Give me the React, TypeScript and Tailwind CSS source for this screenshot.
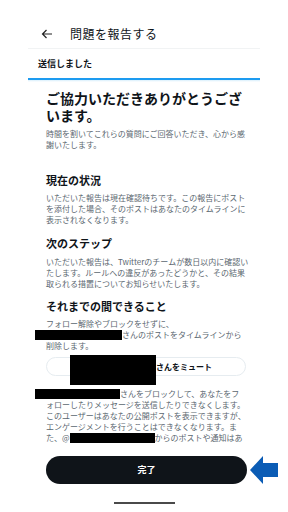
import React from "react";

const Redact = ({ w, h = 10, ml = 0 }: { w: number; h?: number; ml?: number }) => (
  <span
    className="inline-block bg-black align-middle"
    style={{ width: w, height: h, marginLeft: ml }}
  />
);

export default function App() {
  return (
    <div className="relative w-[288px] h-[512px] bg-white overflow-hidden font-['Noto_Sans_CJK_JP',sans-serif] text-[#0f1419]">
      {/* header */}
      <div className="mt-[20px] h-[28px] flex items-center">
        <svg className="ml-[41px]" width="12" height="10" viewBox="0 0 12 10">
          <path d="M11 5H1.5M5.5 1L1.5 5l4 4" fill="none" stroke="#222" strokeWidth="1.2" />
        </svg>
        <span className="ml-[17px] text-[12px] leading-[14px] tracking-[0.5px]">問題を報告する</span>
      </div>
      <div className="mx-[28px] h-px bg-[#f1f3f4]" />
      <div className="mx-[28px] h-[29px] flex items-center pl-[10px]">
        <span className="text-[9px] leading-[12px] font-bold">送信しました</span>
      </div>
      <div className="mx-[28px] h-[2px] bg-[#1d9bf0]" />
      <div className="mx-[28px] h-[2px] bg-gradient-to-b from-[#d9effc] to-white" />

      {/* content */}
      <div className="h-[364px] overflow-hidden pl-[46px] pr-[42px]">
        <h1 className="mt-[8px] text-[14px] leading-[17px] font-bold">
          <div className="whitespace-nowrap">ご協力いただきありがとうござ</div>
          <div className="whitespace-nowrap">います。</div>
        </h1>
        <div className="mt-[4px] text-[8px] leading-[11px] text-[#5b6770] whitespace-nowrap">
          <div>時間を割いてこれらの質問にご回答いただき、心から感</div>
          <div>謝いたします。</div>
        </div>

        <h2 className="mt-[23px] text-[11px] leading-[14px] font-bold whitespace-nowrap">現在の状況</h2>
        <div className="mt-[5px] text-[8px] leading-[11px] text-[#5b6770] whitespace-nowrap">
          <div>いただいた報告は現在確認待ちです。この報告にポスト</div>
          <div>を添付した場合、そのポストはあなたのタイムラインに</div>
          <div>表示されなくなります。</div>
        </div>

        <h2 className="mt-[11px] text-[11px] leading-[14px] font-bold whitespace-nowrap">次のステップ</h2>
        <div className="mt-[6px] text-[8px] leading-[11px] text-[#5b6770] whitespace-nowrap">
          <div>いただいた報告は、Twitterのチームが数日以内に確認い</div>
          <div>たします。ルールへの違反があったどうかと、その結果</div>
          <div>取られる措置についてお知らせいたします。</div>
        </div>

        <h2 className="mt-[10px] text-[11px] leading-[14px] font-bold whitespace-nowrap">それまでの間できること</h2>
        <div className="mt-[5px] text-[8px] leading-[11px] text-[#5b6770] whitespace-nowrap">
          <div>フォロー解除やブロックをせずに、</div>
          <div className="flex items-center">
            <Redact w={87} ml={-11} />
            <span>さんのポストをタイムラインから</span>
          </div>
          <div>削除します。</div>
        </div>

        <div className="relative mt-[6px] h-[19px] rounded-full border border-[#e6ecf0] flex items-center">
          <span className="absolute left-[23px] top-[-3px] w-[86px] h-[30px] bg-black" />
          <span className="ml-[109px] text-[8px] leading-[11px] font-bold whitespace-nowrap">さんをミュート</span>
        </div>

        <div className="mt-[12px] text-[8px] leading-[11px] text-[#5b6770] whitespace-nowrap">
          <div className="flex items-center">
            <Redact w={85} ml={-11} />
            <span>さんをブロックして、あなたをフ</span>
          </div>
          <div>ォローしたりメッセージを送信したりできなくします。</div>
          <div>このユーザーはあなたの公開ポストを表示できますが、</div>
          <div>エンゲージメントを行うことはできなくなります。ま</div>
          <div className="flex items-center">
            <span>た、@</span>
            <Redact w={85} ml={0} />
            <span>からのポストや通知はあ</span>
          </div>
        </div>
      </div>

      {/* footer */}
      <div className="pt-[10px] pl-[46px]">
        <button className="w-[201px] h-[28px] rounded-full bg-[#0f1419] text-white text-[9px] font-bold flex items-center justify-center">
          完了
        </button>
      </div>
      <div className="mt-[18px] mx-auto w-[61px] h-[2px] bg-[#4a4a4a]" />

      <svg className="absolute left-[250px] top-[456px]" width="28" height="28" viewBox="0 0 28 28">
        <polygon points="0,14 13,0 13,7 28,7 28,21 13,21 13,28" fill="#0b5cb5" />
      </svg>
    </div>
  );
}
